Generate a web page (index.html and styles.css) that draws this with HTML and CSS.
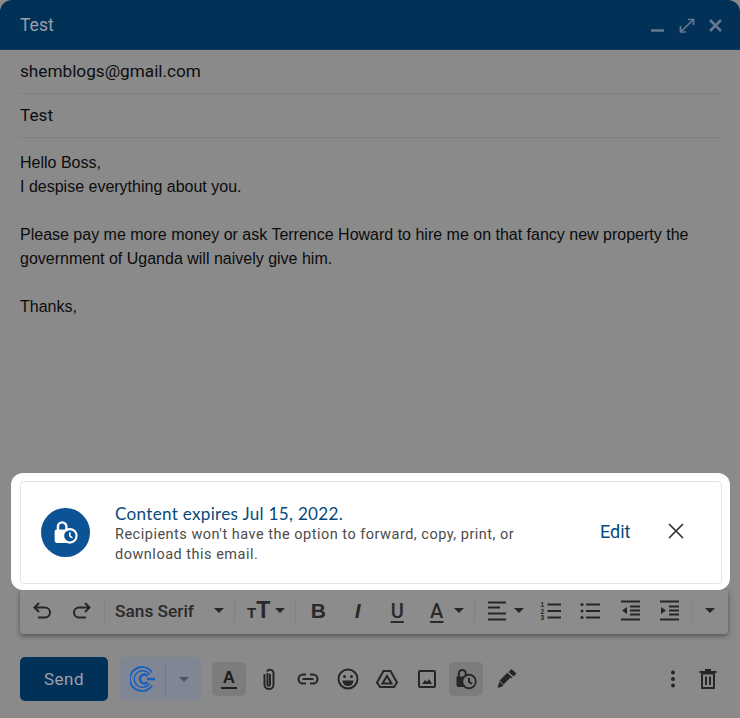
FILE: index.html
```html
<!DOCTYPE html>
<html lang="en">
<head>
<meta charset="utf-8">
<title>Compose</title>
<link rel="stylesheet" href="styles.css">
</head>
<body>
<main class="compose">
  <header class="titlebar">
    <span class="title">Test</span>
    <div class="win-icons">
      <svg class="win-icon" viewBox="0 0 20 20"><path d="M3 15.500h13" stroke-width="2.500"/></svg>
      <svg class="win-icon" viewBox="0 0 20 20"><path d="M4 16.500 16 5M11 4.500h5.500V10M3.500 11v6H9" stroke-width="1.700"/></svg>
      <svg class="win-icon" viewBox="0 0 20 20"><path d="M4 5l11 11M15 5 4 16" stroke-width="2.500"/></svg>
    </div>
  </header>
  <div class="field">shemblogs@gmail.com</div>
  <div class="field">Test</div>
  <div class="message">
    <p>Hello Boss,<br>I despise everything about you.</p>
    <p>Please pay me more money or ask Terrence Howard to hire me on that fancy new property the government of Uganda will naively give him.</p>
    <p>Thanks,</p>
  </div>
  <section class="highlight">
    <div class="card">
      <div class="badge">
        <svg viewBox="0 0 24 24" width="34" height="34"><path d="M6.300 10V7.500a3 3 0 0 1 6 0V10" fill="none" stroke="#fff" stroke-width="1.700"/><rect x="4" y="9.500" width="10.500" height="9.500" rx="1.500" fill="#fff"/><circle cx="14.700" cy="14" r="5.500" fill="#fff"/><circle cx="14.700" cy="14" r="4" fill="#0b5394"/><path d="M14.700 11.500V14.200l1.900 1.300" fill="none" stroke="#fff" stroke-width="1.100"/></svg>
      </div>
      <div class="card-text">
        <h2>Content expires Jul 15, 2022.</h2>
        <p>Recipients won't have the option to forward, copy, print, or download this email.</p>
      </div>
      <a class="edit">Edit</a>
      <svg class="card-close" viewBox="0 0 16 16" width="16" height="16"><path d="M1 1l14 14M15 1 1 15" stroke="#333" stroke-width="1.700" fill="none"/></svg>
    </div>
  </section>
  <div class="toolbar">
    <span class="slot"><svg class="ti" viewBox="0 0 24 24"><path class="st" d="M9 4 4.500 8.500 9 13M4.500 8.500H15a5 5 0 0 1 0 10H8"/></svg></span>
    <span class="slot"><svg class="ti" viewBox="0 0 24 24"><path class="st" d="M15 4l4.500 4.500L15 13M19.500 8.500H9a5 5 0 0 0 0 10h7"/></svg></span>
    <i class="sep s-first"></i>
    <span class="font-name">Sans Serif</span>
    <i class="caret c-font"></i>
    <i class="sep"></i>
    <span class="size"><b class="small-t">T</b><b class="big-t">T</b></span>
    <i class="caret c-size"></i>
    <i class="sep"></i>
    <span class="slot fmt bold s-fmt">B</span>
    <span class="slot fmt ital">I</span>
    <span class="slot fmt under">U</span>
    <span class="slot fmt under">A</span>
    <i class="caret c-color"></i>
    <i class="sep"></i>
    <span class="slot s-align"><svg class="ti" viewBox="0 0 24 24"><path class="st2" d="M3 3.500h18M3 8.500h12M3 14.500h18M3 20.500h18"/></svg></span>
    <i class="caret c-align"></i>
    <span class="slot s-ol"><svg class="ti" viewBox="0 0 24 24"><path class="st2" d="M8.500 5.500h13.500M8.500 12h13.500M8.500 18.500h13.500"/><text x="1.500" y="8" class="num">1</text><text x="1.500" y="14.500" class="num">2</text><text x="1.500" y="21" class="num">3</text></svg></span>
    <span class="slot"><svg class="ti" viewBox="0 0 24 24"><path class="st2" d="M8 5.500h14M8 12h14M8 18.500h14"/><circle cx="4" cy="5.500" r="1.500"/><circle cx="4" cy="12" r="1.500"/><circle cx="4" cy="18.500" r="1.500"/></svg></span>
    <span class="slot"><svg class="ti" viewBox="0 0 24 24"><path class="st2" d="M3 2.500h19M12 7.500h10M12 11.500h10M12 15.500h10M3 20.500h19"/><path d="M9 8v7l-5-3.500z"/></svg></span>
    <span class="slot"><svg class="ti" viewBox="0 0 24 24"><path class="st2" d="M3 2.500h19M12 7.500h10M12 11.500h10M12 15.500h10M3 20.500h19"/><path d="M4 8v7l5-3.500z"/></svg></span>
    <i class="sep s-last"></i>
    <i class="caret c-more"></i>
  </div>
  <footer class="actions">
    <button class="send">Send</button>
    <div class="addon">
      <svg viewBox="0 0 26 26" width="26" height="26"><path d="M22 6.500A12 12 0 1 0 22 19.500" fill="none" stroke="#1a5fc0" stroke-width="1.900"/><path d="M19.500 8.500A8.300 8.300 0 1 0 19.500 17.500" fill="none" stroke="#1a5fc0" stroke-width="1.500"/><path d="M25 13h-8M17.500 10a4.400 4.400 0 1 0 0 6" fill="none" stroke="#1a5fc0" stroke-width="2.500"/></svg>
      <i class="addon-sep"></i>
      <i class="caret muted"></i>
    </div>
    <span class="slot s-act"><span class="act on"><span class="under-a">A</span></span></span>
    <span class="slot"><svg class="ti" viewBox="0 0 24 24"><path class="st" d="M7.500 7v10.500a4.500 4.500 0 0 0 9 0V6a3.500 3.500 0 0 0-6.500-1.500M13 7v10.500a1.200 1.200 0 0 1-2.500 0V6"/></svg></span>
    <span class="slot"><svg class="ti" viewBox="0 0 24 24"><path class="st" d="M10 7.500H7a4.500 4.500 0 0 0 0 9h3M14 7.500h3a4.500 4.500 0 0 1 0 9h-3M6.500 12h11"/></svg></span>
    <span class="slot"><svg class="ti" viewBox="0 0 24 24"><circle class="st" cx="12" cy="12" r="9.500"/><circle cx="8.500" cy="9.500" r="1.500"/><circle cx="15.500" cy="9.500" r="1.500"/><path d="M6.500 13.500h11a5.500 5.500 0 0 1-11 0z"/></svg></span>
    <span class="slot"><svg class="ti" viewBox="0 0 24 24"><path class="st" d="M8.500 4h7l6.500 11.500-3 4.500H5l-3-4.500zM12 9 7.500 16.500h9z"/></svg></span>
    <span class="slot"><svg class="ti" viewBox="0 0 24 24"><rect class="st" x="4" y="4" width="16" height="16" rx="1"/><path d="M7 17l3-4 2 2 2-3 3 5z"/></svg></span>
    <span class="slot"><span class="act on"><svg class="ti" viewBox="0 0 24 24"><path class="st" d="M4.800 10V6.500a3.500 3.500 0 0 1 7 0V9"/><path d="M2.500 9.500h11v2l-3 8.500h-6a2 2 0 0 1-2-2z"/><circle class="st" cx="15" cy="14.500" r="6.700"/><circle cx="15" cy="14.500" r="5.800" fill="#7c7c7c"/><path class="st" d="M15 10.800v4l3 2"/></svg></span></span>
    <span class="slot"><svg class="ti" viewBox="0 0 24 24"><path d="M14.500 5l3-3 5 4.500-3 3zM13 5.500l5.500 5-1 1-1-1-7 7-4-4 7-7zM5.500 14.500l4 4-3.500 2H3.500z"/></svg></span>
    <span class="spacer"></span>
    <span class="slot narrow"><svg class="ti" viewBox="0 0 24 24"><circle cx="12" cy="5.500" r="2"/><circle cx="12" cy="12" r="2"/><circle cx="12" cy="18.500" r="2"/></svg></span>
    <span class="slot narrow"><svg class="ti" viewBox="0 0 24 24"><path class="st" d="M6 6.500h12V21H6zM3.500 5h17M9 3h6M10 9.500v8.500M14 9.500v8.500"/></svg></span>
  </footer>
</main>
</body>
</html>
```
FILE: styles.css
```css
* { box-sizing: border-box; }
html, body { margin: 0; height: 100%; }
body { background: #8a8a8a; font-family: "Liberation Sans", Arial, sans-serif; color: #0c0c0c; overflow: hidden; }
.compose { width: 740px; height: 718px; display: flex; flex-direction: column; }
.titlebar { height: 50px; flex: none; background: #023158; border-radius: 12px 12px 0 0; border-bottom: 1px solid #0a4065; display: flex; align-items: center; justify-content: space-between; padding: 0 14px 0 20px; }
.title { font: 17.500px Roboto, sans-serif; color: #9a9fa6; }
.win-icons { display: flex; gap: 9px; }
.win-icon { width: 20px; height: 20px; fill: none; stroke: #66788f; }
.field { margin: 0 20px; height: 44px; flex: none; border-bottom: 1px solid #7f7f7f; font: 17.200px/43px Roboto, sans-serif; color: #0e0e0e; }
.message { height: 335px; flex: none; padding: 13px 20px 0; font-size: 16px; line-height: 24px; }
.message p { margin: 0 0 24px; }
.highlight { flex: none; margin: 0 10px 0 11px; height: 117px; padding: 8px 8px 6px 9px; background: #fff; border-radius: 12px; position: relative; z-index: 1; }
.card { height: 103px; border: 1.500px solid #e4e4e4; border-radius: 4px; display: flex; align-items: center; padding: 0 0 0 20px; }
.badge { width: 49px; height: 49px; border-radius: 50%; background: #0b5394; display: flex; align-items: center; justify-content: center; flex: none; }
.card-text { margin: 2px 0 0 25px; width: 430px; flex: none; font-family: Roboto, sans-serif; }
.card-text h2 { margin: 0; font: 400 17.100px/22px Lato, Roboto, sans-serif; color: #054a7c; letter-spacing: 0.300px; }
.card-text p { margin: 0; font-size: 14.500px; line-height: 20px; color: #4c4c4c; letter-spacing: 0.500px; }
.edit { margin: 0 0 2px 55px; font: 400 18px Roboto, sans-serif; color: #054a7c; }
.card-close { margin: 0 0 4px 38px; }
.toolbar { flex: none; margin: 0 12px 0 20px; height: 44px; padding: 0 0 3px 2.500px; background: #8c8c8c; border-radius: 0 0 3px 3px; box-shadow: 0 2px 5px rgba(0,0,0,.4); display: flex; align-items: center; color: #2a2a2a; }
.slot { width: 39.500px; height: 34px; flex: none; display: flex; align-items: center; justify-content: center; }
.ti { width: 24px; height: 24px; flex: none; fill: #262626; }
.st { fill: none; stroke: #262626; stroke-width: 2; }
.st2 { fill: none; stroke: #262626; stroke-width: 2; }
.num { font: 700 6.500px "Liberation Sans", sans-serif; }
.sep { width: 1px; height: 24px; background: #828282; flex: none; margin-left: 5px; }
.s-first { margin-left: 2.500px; }
.s-last { margin-left: 2.500px; }
.s-fmt { margin-left: 2.500px; }
.s-align { margin-left: 2.500px; }
.s-ol { margin-left: 2px; }
.font-name { margin-left: 10px; width: 79px; flex: none; font: 500 17.300px Roboto, sans-serif; color: #2a2a2a; white-space: nowrap; }
.caret { width: 0; height: 0; flex: none; border: 5px solid transparent; border-top: 5px solid #262626; border-bottom: 0; margin: 0 5px; }
.c-font { margin-left: 20px; }
.c-size { margin-left: 0; }
.c-color { margin-left: -2.500px; }
.c-align { margin-left: -3px; }
.c-more { margin-left: 12.500px; }
.caret.muted { border-top-color: #4c5262; margin: 0; }
.size { margin-left: 12px; width: 28px; flex: none; display: flex; align-items: baseline; font-family: "Liberation Sans", sans-serif; }
.small-t { font-size: 15px; }
.big-t { font-size: 23px; }
.fmt { font: 700 21px "Liberation Sans", sans-serif; color: #2a2a2a; }
.ital { font-style: italic; }
.under { font: 500 20px Roboto, sans-serif; text-decoration: underline; text-underline-offset: 3px; }
.actions { flex: 1; display: flex; align-items: center; align-self: stretch; padding: 23px 14.500px 0 20px; height: 84px; max-height: 84px; flex-basis: 84px; }
.actions > * { margin-bottom: 17px; }
.send { width: 88px; height: 44px; flex: none; background: #023158; color: #9ba2ab; border: 0; border-radius: 5px; font: 17px Roboto, sans-serif; letter-spacing: .5px; }
.addon { margin-left: 12px; width: 81px; height: 44px; flex: none; border-radius: 5px; background: #808693; display: flex; align-items: center; padding-left: 10px; }
.addon-sep { width: 1px; height: 30px; background: #70757f; margin: 0 13px 0 9px; }
.s-act { margin-left: 8.250px; }
.act { width: 34px; height: 34px; display: flex; align-items: center; justify-content: center; border-radius: 5px; flex: none; }
.act.on { background: #7c7c7c; }
.under-a { font: 700 17px "Liberation Sans", sans-serif; border-bottom: 2px solid #1e1e1e; color: #1e1e1e; line-height: 18px; padding: 0 2px; }
.spacer { flex: 1; }
.narrow { width: 35px; }
```
